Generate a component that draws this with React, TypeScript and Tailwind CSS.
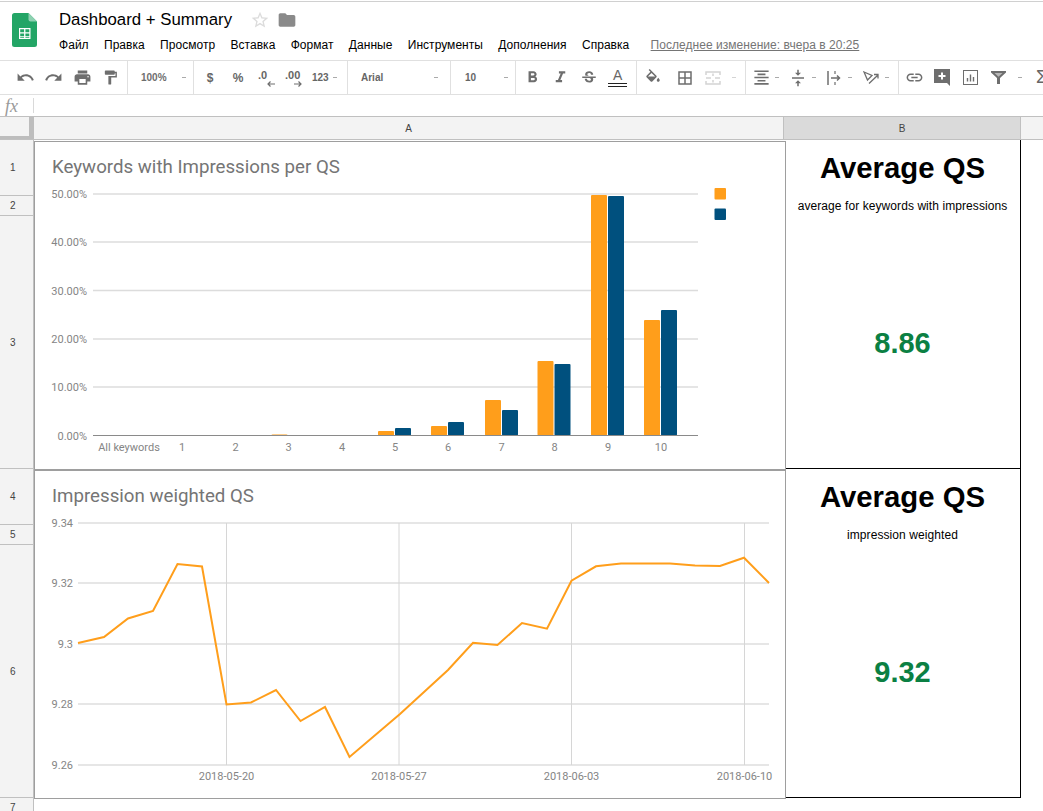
import {
  MdUndo,
  MdRedo,
  MdPrint,
  MdFormatPaint,
  MdFormatBold,
  MdFormatItalic,
  MdStrikethroughS,
  MdBorderAll,
  MdFormatAlignCenter,
  MdVerticalAlignCenter,
  MdLink,
  MdStarBorder,
  MdFolder,
} from 'react-icons/md';

const menuItems = ['Файл', 'Правка', 'Просмотр', 'Вставка', 'Формат', 'Данные', 'Инструменты', 'Дополнения', 'Справка'];

const rows = [
  { n: 1, h: 'h-[56px]' },
  { n: 2, h: 'h-[20px]' },
  { n: 3, h: 'h-[253px]' },
  { n: 4, h: 'h-[56px]' },
  { n: 5, h: 'h-[20px]' },
  { n: 6, h: 'h-[253px]' },
  { n: 7, h: 'h-[20px]' },
];

const barGroups = [
  { c: 288.5, orange: 434.5 },
  { c: 395, orange: 431, blue: 428 },
  { c: 448, orange: 426, blue: 422 },
  { c: 502, orange: 400, blue: 410 },
  { c: 554.5, orange: 361, blue: 364 },
  { c: 608, orange: 195, blue: 196 },
  { c: 661, orange: 320, blue: 310 },
];

const categories = [
  { label: 'All keywords', x: 129 },
  { label: '1', x: 182 },
  { label: '2', x: 235.5 },
  { label: '3', x: 288.5 },
  { label: '4', x: 342 },
  { label: '5', x: 395 },
  { label: '6', x: 448 },
  { label: '7', x: 501.5 },
  { label: '8', x: 554.5 },
  { label: '9', x: 608 },
  { label: '10', x: 661 },
];

const percentTicks = [
  { label: '50.00%', y: 194 },
  { label: '40.00%', y: 242 },
  { label: '30.00%', y: 290.5 },
  { label: '20.00%', y: 339 },
  { label: '10.00%', y: 387 },
];

const qsTicks = [
  { label: '9.34', y: 523 },
  { label: '9.32', y: 583 },
  { label: '9.3', y: 644 },
  { label: '9.28', y: 704 },
  { label: '9.26', y: 765 },
];

const dateTicks = [
  { label: '2018-05-20', x: 226.5 },
  { label: '2018-05-27', x: 399 },
  { label: '2018-06-03', x: 571.5 },
  { label: '2018-06-10', x: 744.5 },
];

const qsLine =
  '78,643 104,637 128,618.5 153,611 177.5,564 202,566.5 226.5,704.5 251,702.5 276,690 300.5,721 325,707 349.5,757 400,714 448,670 473,642.7 497.5,645 522,623 547,628.7 571.5,580.7 596,566.3 621,563.5 670,563.5 695,565.5 720,566 744,557.7 769,583';

function Caret({ className = '' }: { className?: string }) {
  return <div className={`w-[4px] h-[1.5px] bg-[#aaa] ${className}`} />;
}

function Tool({ children, className = 'w-[28px]' }: { children: React.ReactNode; className?: string }) {
  return <div className={`flex items-center justify-center shrink-0 h-full text-[#6e6e6e] ${className}`}>{children}</div>;
}

function Section({ children, className }: { children: React.ReactNode; className: string }) {
  return <div className={`flex items-center h-full shrink-0 border-r border-[#e0e0e0] ${className}`}>{children}</div>;
}

function SheetsLogo() {
  return (
    <svg width="25" height="34" viewBox="0 0 25 34">
      <path d="M2.5 0H16.500L25 8.500V31.500A2.500 2.500 0 0 1 22.500 34H2.500A2.500 2.500 0 0 1 0 31.500V2.500A2.500 2.500 0 0 1 2.500 0Z" fill="#23a566" />
      <path d="M16.500 0L25 8.500H18.500A2 2 0 0 1 16.500 6.500Z" fill="#8ed1b1" />
      <path
        d="M7 15H18.500V26H7ZM8.200 16.200V19.300H12.100V16.200ZM13.400 16.200V19.300H17.300V16.200ZM8.200 20.500V23.300H12.100V20.500ZM13.400 20.500V23.300H17.300V20.500ZM8.200 24.300V24.900H12.100V24.300ZM13.400 24.300V24.900H17.300V24.300Z"
        fill="#fff"
        fillRule="evenodd"
      />
    </svg>
  );
}

function FillIcon() {
  return (
    <svg width="18" height="18" viewBox="0 0 24 24" fill="#6e6e6e">
      <path d="M16.560 8.940L7.620 0 6.210 1.410l2.380 2.380-5.150 5.150c-.59.59-.59 1.540 0 2.120l5.500 5.500c.29.29.68.44 1.060.44s.77-.15 1.060-.44l5.500-5.500c.59-.58.59-1.530 0-2.120zM5.210 10L10 5.210 14.790 10H5.210zM19 11.500s-2 2.170-2 3.500c0 1.100.9 2 2 2s2-.9 2-2c0-1.330-2-3.500-2-3.500z" />
    </svg>
  );
}

function MergeIcon() {
  return (
    <svg width="16" height="14" viewBox="0 0 16 14" fill="none" stroke="#d4d4d4" strokeWidth="1.500">
      <path d="M1 4V1H15V4M1 10V13H15V10" />
      <path d="M1 7H6M10 7H15M8 2.500V5M8 9V11.500" />
    </svg>
  );
}

function WrapIcon() {
  return (
    <svg width="14" height="14" viewBox="0 0 14 14" fill="none" stroke="#6e6e6e" strokeWidth="1.500">
      <path d="M1 0V14" />
      <path d="M4 7H12.500M10 4.500L12.500 7L10 9.500" />
      <path d="M8 0V3M8 11V14" strokeWidth="1.200" />
    </svg>
  );
}

function RotateIcon() {
  return (
    <svg width="16" height="14" viewBox="0 0 16 14" fill="none" stroke="#6e6e6e" strokeWidth="1.300">
      <path d="M1 1L9 4.500L4.500 9Z" />
      <path d="M6 12.500L15 4M11 3.500H15V7.500" />
    </svg>
  );
}

function CommentIcon() {
  return (
    <svg width="16" height="17" viewBox="0 0 16 17">
      <path d="M0 0H16V17L13 14H0Z" fill="#6e6e6e" />
      <path d="M7 3.500H9V6H11.500V8H9V10.500H7V8H4.500V6H7Z" fill="#fff" />
    </svg>
  );
}

function ChartIcon() {
  return (
    <svg width="15" height="15" viewBox="0 0 15 15" fill="none" stroke="#6e6e6e">
      <rect x="0.500" y="0.500" width="14" height="14" />
      <path d="M4.500 11.500V8M7.500 11.500V4.500M10.500 11.500V7" strokeWidth="1.400" />
    </svg>
  );
}

function FilterIcon() {
  return (
    <svg width="15" height="13" viewBox="0 0 15 13">
      <path d="M0 0H15V1.500L9 7V13H6V7L0 1.500Z" fill="#6e6e6e" />
      <path d="M3.500 2L7.500 5.700L11.500 2Z" fill="#fff" fillOpacity="0.500" />
    </svg>
  );
}

function DecimalTool({ label, left, textPad, arrowPad }: { label: string; left: boolean; textPad: string; arrowPad: string }) {
  return (
    <div className="flex flex-col w-[28px] shrink-0 leading-none pt-[2px]">
      <span className={`text-[11px] font-bold text-[#666] h-[11px] leading-[11px] ${textPad}`}>{label}</span>
      <svg width="8" height="6" viewBox="0 0 8 6" fill="none" stroke="#6e6e6e" strokeWidth="1.200" className={arrowPad}>
        {left ? <path d="M8 3H1M3.500 0.500L1 3L3.500 5.500" /> : <path d="M0 3H7M4.500 0.500L7 3L4.500 5.500" />}
      </svg>
    </div>
  );
}

function Toolbar() {
  return (
    <div className="flex items-center h-[34px] border-b border-[#e0e0e0] overflow-hidden">
      <Section className="w-[128px] pl-[11px]">
        <Tool className="w-[28.500px]"><MdUndo size={19} /></Tool>
        <Tool className="w-[28.500px]"><MdRedo size={19} /></Tool>
        <Tool className="w-[28.500px]"><MdPrint size={19} /></Tool>
        <Tool className="w-[28.500px]"><MdFormatPaint size={17} /></Tool>
      </Section>
      <Section className="w-[66px] pl-[13px]">
        <span className="text-[10px] font-bold text-[#6e6e6e] w-[41px]">100%</span>
        <Caret />
      </Section>
      <Section className="w-[154px] pl-[2px]">
        <Tool><span className="text-[12px] font-bold text-[#666]">$</span></Tool>
        <Tool><span className="text-[12px] font-bold text-[#666]">%</span></Tool>
        <DecimalTool label=".0" left textPad="pl-[6px]" arrowPad="ml-[15px]" />
        <DecimalTool label=".00" left={false} textPad="pl-[5px]" arrowPad="ml-[14px]" />
        <span className="text-[10px] font-bold text-[#666] ml-[4px] mr-[4px]">123</span>
        <Caret />
      </Section>
      <Section className="w-[103px] pl-[13px]">
        <span className="text-[10px] font-bold text-[#666] w-[73px]">Arial</span>
        <Caret />
      </Section>
      <Section className="w-[65px] pl-[14px]">
        <span className="text-[10px] font-bold text-[#666] w-[39px]">10</span>
        <Caret />
      </Section>
      <Section className="w-[121px] pl-[2px]">
        <Tool className="w-[28.500px]"><MdFormatBold size={19} /></Tool>
        <Tool className="w-[28.500px]"><MdFormatItalic size={19} /></Tool>
        <Tool className="w-[28.500px]"><MdStrikethroughS size={18} /></Tool>
        <Tool className="w-[28.500px]">
          <div className="flex flex-col items-center">
            <span className="text-[14px] leading-[15px] text-[#666]">A</span>
            <div className="w-[19px] h-[4px] border-y border-[#222]" />
          </div>
        </Tool>
      </Section>
      <Section className="w-[109px] pl-[2px]">
        <Tool><FillIcon /></Tool>
        <Tool className="w-[28px] ml-[4px]"><MdBorderAll size={18} /></Tool>
        <Tool><MergeIcon /></Tool>
        <Caret className="ml-[5px] !bg-[#d4d4d4]" />
      </Section>
      <Section className="w-[153px] pl-[3px]">
        <div className="flex items-center w-[36.600px]">
          <Tool className="w-[24px]"><MdFormatAlignCenter size={19} /></Tool>
          <Caret className="ml-[2px]" />
        </div>
        <div className="flex items-center w-[36.600px]">
          <Tool className="w-[24px]"><MdVerticalAlignCenter size={18} /></Tool>
          <Caret className="ml-[2px]" />
        </div>
        <div className="flex items-center w-[36.600px]">
          <Tool className="w-[24px]"><WrapIcon /></Tool>
          <Caret className="ml-[2px]" />
        </div>
        <div className="flex items-center w-[36.600px]">
          <Tool className="w-[24px]"><RotateIcon /></Tool>
          <Caret className="ml-[2px]" />
        </div>
      </Section>
      <div className="flex items-center h-full shrink-0 pl-[1px]">
        <Tool><MdLink size={19} /></Tool>
        <Tool><CommentIcon /></Tool>
        <Tool><ChartIcon /></Tool>
        <Tool><FilterIcon /></Tool>
        <Caret className="ml-[6px]" />
        <span className="text-[18px] text-[#666] ml-[14px]">Σ</span>
      </div>
    </div>
  );
}

function KeywordsChart() {
  return (
    <svg viewBox="35 142 750 327" className="block w-full h-full" fontFamily="Roboto, sans-serif">
      <text x="52" y="173" fontSize="18.700" fill="#757575">Keywords with Impressions per QS</text>
      {percentTicks.map(t => (
        <g key={t.label}>
          <line x1="93" x2="698" y1={t.y} y2={t.y} stroke="#dcdcdc" strokeWidth="1.300" />
          <text x="87" y={t.y + 4} fontSize="11" fill="#858585" textAnchor="end">{t.label}</text>
        </g>
      ))}
      <text x="87" y="439.500" fontSize="11" fill="#858585" textAnchor="end">0.00%</text>
      {barGroups.map(b => (
        <g key={b.c}>
          <rect x={b.c - 17} y={b.orange} width="16" height={435.500 - b.orange} rx="1" fill="#ff9e1b" />
          {b.blue && <rect x={b.c} y={b.blue} width="16" height={435.500 - b.blue} rx="1" fill="#00507e" />}
        </g>
      ))}
      <line x1="93" x2="698" y1="435.500" y2="435.500" stroke="#8a8a8a" strokeWidth="1" />
      {categories.map(c => (
        <text key={c.label} x={c.x} y="451" fontSize="11" fill="#858585" textAnchor="middle">{c.label}</text>
      ))}
      <rect x="714.500" y="188" width="11.500" height="11.500" rx="1" fill="#ff9e1b" />
      <rect x="714.500" y="208.500" width="11.500" height="11.500" rx="1" fill="#00507e" />
    </svg>
  );
}

function WeightedChart() {
  return (
    <svg viewBox="35 471 750 327" className="block w-full h-full" fontFamily="Roboto, sans-serif">
      <text x="52" y="502" fontSize="18.700" fill="#757575">Impression weighted QS</text>
      {qsTicks.map(t => (
        <g key={t.label}>
          <line x1="78" x2="769" y1={t.y} y2={t.y} stroke="#e6e6e6" strokeWidth="1.800" />
          <text x="73" y={t.y + 4} fontSize="11" fill="#858585" textAnchor="end">{t.label}</text>
        </g>
      ))}
      {dateTicks.map(t => (
        <g key={t.label}>
          <line x1={t.x} x2={t.x} y1="523" y2="765" stroke="#d6d6d6" strokeWidth="1" />
          <text x={t.x} y="780" fontSize="11" fill="#858585" textAnchor="middle">{t.label}</text>
        </g>
      ))}
      <polyline points={qsLine} fill="none" stroke="#ff9e1b" strokeWidth="2" />
    </svg>
  );
}

function SummaryCell({ subtitle, value }: { subtitle: string; value: string }) {
  return (
    <div className="flex flex-col h-[329px] pr-px border-b border-black">
      <div className="flex items-center justify-center h-[55px] text-[29.330px] font-bold text-black">Average QS</div>
      <div className="flex items-center justify-center h-[22px] text-[12px] tracking-[0.08px] text-black">{subtitle}</div>
      <div className="flex items-center justify-center flex-1 pt-[2px] text-[29px] font-bold text-[#0b8043]">{value}</div>
    </div>
  );
}

export default function App() {
  return (
    <div className="w-[1043px] h-[811px] overflow-hidden bg-white font-['Liberation_Sans',Arial,sans-serif]">
      {/* Title bar */}
      <div className="flex h-[59px] pt-px mt-px border-t border-[#d0d0d0]">
        <div className="w-[59px] shrink-0 pl-[12px] pt-[10px]">
          <SheetsLogo />
        </div>
        <div className="flex flex-col">
          <div className="flex items-center h-[32px] pt-[1px]">
            <span className="text-[16.800px] text-black">Dashboard + Summary</span>
            <MdStarBorder size={20} className="ml-[18px] text-[#dcdcdc]" />
            <MdFolder size={20} className="ml-[7px] text-[#8a8a8a]" />
          </div>
          <div className="flex items-center gap-[15.300px] h-[20px] text-[12px] tracking-[0.04px] text-black">
            {menuItems.map(item => (
              <span key={item}>{item}</span>
            ))}
            <span className="ml-[6px] text-[#757575] underline">Последнее изменение: вчера в 20:25</span>
          </div>
        </div>
      </div>
      <div className="border-t border-[#e0e0e0]">
        <Toolbar />
      </div>

      {/* Formula bar */}
      <div className="flex items-center h-[22px] border-b border-[#c0c0c0]">
        <span className="w-[33px] pl-[5px] font-['Liberation_Serif',serif] italic text-[18px] leading-none text-[#9a9a9a]">fx</span>
        <div className="w-px h-[15px] bg-[#d9d9d9]" />
      </div>

      {/* Column headers */}
      <div className="flex h-[23px] bg-[#f3f3f3] border-b border-[#c0c0c0] text-[10px] text-[#444]">
        <div className="w-[34px] shrink-0 border-r-[5px] border-b-[3px] border-[#bdbdbd]" />
        <div className="flex items-center justify-center w-[750px] shrink-0 border-r border-[#c0c0c0]">A</div>
        <div className="flex items-center justify-center w-[237px] shrink-0 bg-[#dadada] border-r border-[#c0c0c0]">B</div>
        <div className="flex-1" />
      </div>

      {/* Sheet body */}
      <div className="flex">
        <div className="flex flex-col w-[34px] shrink-0 bg-[#f3f3f3] border-r border-[#c0c0c0] text-[10px] text-[#444]">
          {rows.map(r => (
            <div key={r.n} className={`flex items-center pl-[10px] border-b border-[#c0c0c0] ${r.h}`}>{r.n}</div>
          ))}
        </div>
        <div className="flex flex-col w-[752px] shrink-0 pt-px">
          <div className="h-[329px] border border-[#9e9e9e]">
            <KeywordsChart />
          </div>
          <div className="h-[329px] border border-[#9e9e9e]">
            <WeightedChart />
          </div>
        </div>
        <div className="flex flex-col w-[235px] shrink-0 h-[658px] border-r border-black">
          <SummaryCell subtitle="average for keywords with impressions" value="8.86" />
          <SummaryCell subtitle="impression weighted" value="9.32" />
        </div>
      </div>
    </div>
  );
}
